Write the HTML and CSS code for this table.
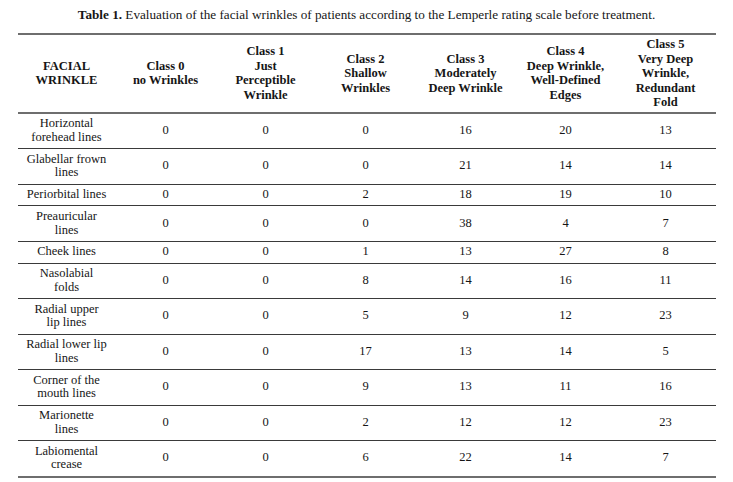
FILE: index.html
```html
<!DOCTYPE html>
<html lang="en">
<head>
<meta charset="utf-8">
<title>Table 1</title>
<link rel="stylesheet" href="styles.css">
</head>
<body>
<div class="page">
  <p class="caption"><b>Table 1.</b> Evaluation of the facial wrinkles of patients according to the Lemperle rating scale before treatment.</p>
  <table class="data">
    <colgroup>
      <col class="c-first">
      <col class="c-num"><col class="c-num"><col class="c-num"><col class="c-num"><col class="c-num"><col class="c-num">
    </colgroup>
    <thead>
      <tr>
        <th>FACIAL<br>WRINKLE</th>
        <th>Class 0<br>no Wrinkles</th>
        <th>Class 1<br>Just<br>Perceptible<br>Wrinkle</th>
        <th>Class 2<br>Shallow<br>Wrinkles</th>
        <th>Class 3<br>Moderately<br>Deep Wrinkle</th>
        <th>Class 4<br>Deep Wrinkle,<br>Well-Defined<br>Edges</th>
        <th>Class 5<br>Very Deep<br>Wrinkle,<br>Redundant<br>Fold</th>
      </tr>
    </thead>
    <tbody>
      <tr><td>Horizontal<br>forehead lines</td><td>0</td><td>0</td><td>0</td><td>16</td><td>20</td><td>13</td></tr>
      <tr><td>Glabellar frown<br>lines</td><td>0</td><td>0</td><td>0</td><td>21</td><td>14</td><td>14</td></tr>
      <tr><td>Periorbital lines</td><td>0</td><td>0</td><td>2</td><td>18</td><td>19</td><td>10</td></tr>
      <tr><td>Preauricular<br>lines</td><td>0</td><td>0</td><td>0</td><td>38</td><td>4</td><td>7</td></tr>
      <tr><td>Cheek lines</td><td>0</td><td>0</td><td>1</td><td>13</td><td>27</td><td>8</td></tr>
      <tr><td>Nasolabial<br>folds</td><td>0</td><td>0</td><td>8</td><td>14</td><td>16</td><td>11</td></tr>
      <tr><td>Radial upper<br>lip lines</td><td>0</td><td>0</td><td>5</td><td>9</td><td>12</td><td>23</td></tr>
      <tr><td>Radial lower lip<br>lines</td><td>0</td><td>0</td><td>17</td><td>13</td><td>14</td><td>5</td></tr>
      <tr><td>Corner of the<br>mouth lines</td><td>0</td><td>0</td><td>9</td><td>13</td><td>11</td><td>16</td></tr>
      <tr><td>Marionette<br>lines</td><td>0</td><td>0</td><td>2</td><td>12</td><td>12</td><td>23</td></tr>
      <tr><td>Labiomental<br>crease</td><td>0</td><td>0</td><td>6</td><td>22</td><td>14</td><td>7</td></tr>
    </tbody>
  </table>
</div>
</body>
</html>
```

FILE: styles.css
```css
html, body {
  margin: 0;
  padding: 0;
  background: #ffffff;
}
body {
  font-family: "Liberation Serif", "Times New Roman", serif;
  color: #161616;
}
.page {
  width: 733px;
  padding-top: 8px;
}
.caption {
  margin: 0 0 11px 0;
  text-align: center;
  font-size: 13.2px;
  line-height: 14px;
}
.caption b {
  font-weight: bold;
}
.data {
  margin: 0 auto;
  width: 698px;
  table-layout: fixed;
  border-collapse: collapse;
  font-size: 12.5px;
}
.c-first { width: 98px; }
.c-num { width: 100px; }
.data thead tr {
  border-top: 2px solid #6e6e6e;
  border-bottom: 2px solid #6e6e6e;
}
.data th {
  font-weight: bold;
  line-height: 14.5px;
  padding: 2px 2px;
  text-align: center;
  vertical-align: middle;
}
.data td {
  line-height: 13.75px;
  padding: 3.5px 2px;
  text-align: center;
  vertical-align: middle;
}
.data tbody tr {
  border-bottom: 1px solid #3a3a3a;
}
.data tbody tr:last-child {
  border-bottom: 2px solid #6e6e6e;
}
```
